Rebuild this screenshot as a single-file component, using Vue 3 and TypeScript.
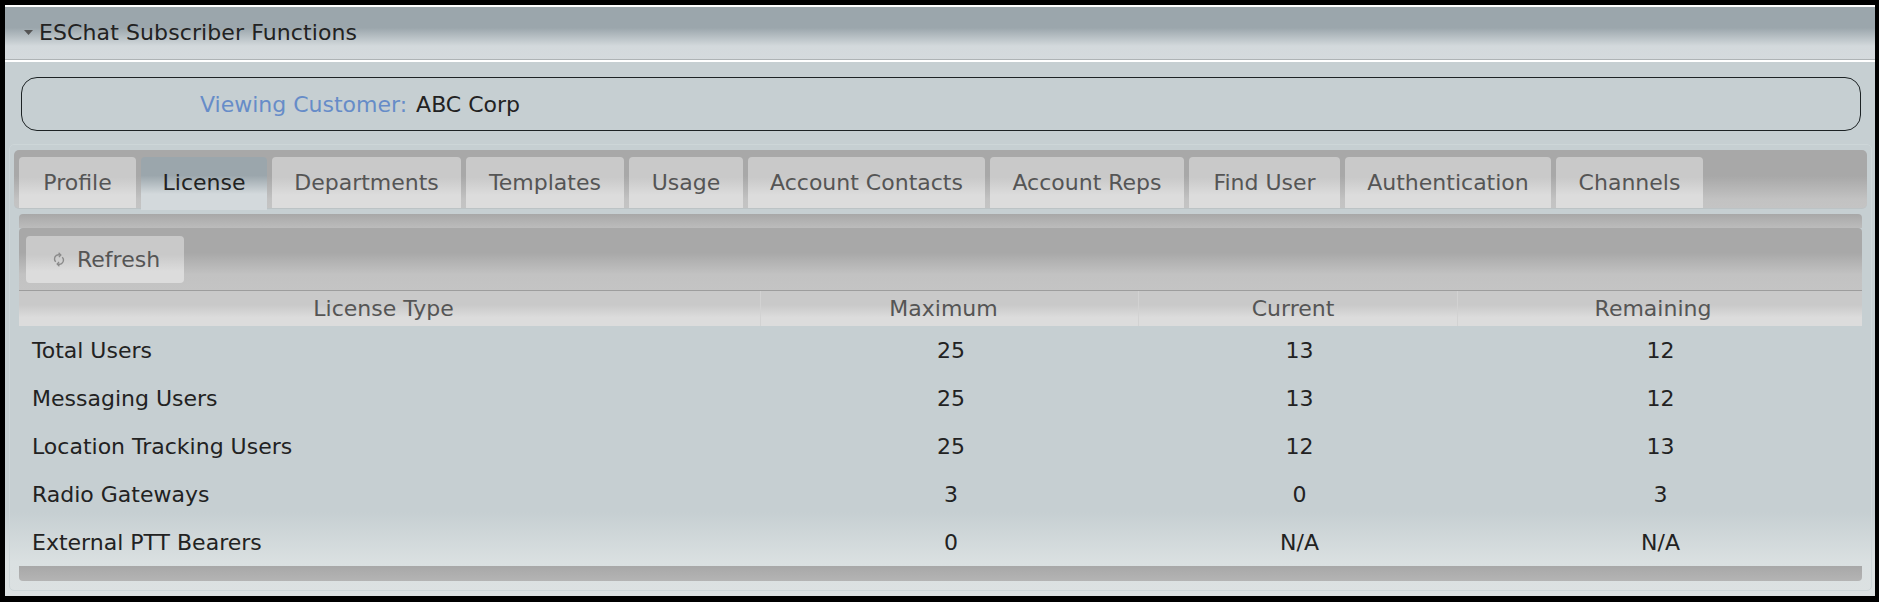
<script setup lang="ts">
const tabs: string[] = ['Profile', 'License', 'Departments', 'Templates', 'Usage', 'Account Contacts', 'Account Reps', 'Find User', 'Authentication', 'Channels']
const columns: string[] = ['License Type', 'Maximum', 'Current', 'Remaining']
const rows: string[][] = [
  ['Total Users', '25', '13', '12'],
  ['Messaging Users', '25', '13', '12'],
  ['Location Tracking Users', '25', '12', '13'],
  ['Radio Gateways', '3', '0', '3'],
  ['External PTT Bearers', '0', 'N/A', 'N/A'],
]
</script>

<template>
  <div class="frame">
    <div class="window">
      <header class="title">
        <svg class="caret" width="9" height="5" viewBox="0 0 9 5"><path d="M0 0h9L4.5 5z" fill="#555" /></svg>
        <span>ESChat Subscriber Functions</span>
      </header>
      <section class="content">
        <div class="customer">
          <span class="customer-label">Viewing Customer:</span>
          <span>ABC Corp</span>
        </div>
        <div class="panel">
          <nav class="tabbar">
            <a v-for="t in tabs" :key="t" class="tab" :class="{ active: t === 'License' }">{{ t }}</a>
          </nav>
          <div class="strip"></div>
          <div class="toolbar">
            <button class="refresh" type="button">
              <svg width="12" height="15" viewBox="0 0 12 15" fill="none" stroke="#8a8a8a" stroke-width="1.4">
                <path d="M7.2 3C4.6 2.2 1.5 3.7 1.5 6.9c0 1.2.5 2.2 1.3 2.9" />
                <path d="M4.8 12c2.6.8 5.7-.7 5.7-3.9 0-1.2-.5-2.2-1.3-2.9" />
                <path d="M5.6.8 7.9 3 5.9 5.2M6.4 14.2 4.1 12 6.1 9.8" stroke-width="1.2" />
              </svg>
              <span>Refresh</span>
            </button>
          </div>
          <div class="thead">
            <div v-for="c in columns" :key="c" class="th">{{ c }}</div>
          </div>
          <div v-for="r in rows" :key="r[0]" class="tr">
            <div v-for="(v, i) in r" :key="i" class="td">{{ v }}</div>
          </div>
          <div class="footer"></div>
        </div>
      </section>
    </div>
  </div>
</template>

<style>
html, body { margin: 0; background: #000; }
</style>

<style scoped>
.frame {
  box-sizing: border-box;
  width: 1879px;
  height: 602px;
  padding: 5px 4px 6px 5px;
  background: #000;
  font-family: "DejaVu Sans", sans-serif;
  font-size: 22px;
  color: #222;
}
.window {
  height: 100%;
  display: flex;
  flex-direction: column;
}
.title {
  box-sizing: border-box;
  height: 57px;
  flex: none;
  display: flex;
  align-items: center;
  gap: 6px;
  padding: 2px 0 5px 19px;
  letter-spacing: 0.1px;
  background:
    linear-gradient(#fff, #fff) top / 100% 2px no-repeat,
    linear-gradient(#fff, #fff) bottom / 100% 2px no-repeat,
    linear-gradient(#aeb3b5, #aeb3b5) 0 54px / 100% 1px no-repeat,
    linear-gradient(#9ba6ac 0%, #9ba6ac 40%, #d3d9dc 72%, #d5dadd 100%);
}
.caret { margin-top: 1px; }
.content {
  flex: 1;
  min-height: 0;
  padding: 15px 3px 0 4px;
  background: linear-gradient(#c6cfd2 0, #c6cfd2 450px, #dae0e1 500px, #dce1e2 100%);
}
.customer {
  box-sizing: border-box;
  height: 54px;
  margin: 0 11px 0 12px;
  padding-left: 178px;
  display: flex;
  align-items: center;
  gap: 9px;
  border: 1px solid #1d2325;
  border-radius: 16px;
}
.customer-label { color: #668cc8; }
.panel {
  margin-top: 13px;
  padding: 5px 4px 0;
  height: 447px;
  box-sizing: border-box;
  border: 1px solid #cdd6d8;
  border-radius: 5px;
}
.tabbar {
  box-sizing: border-box;
  height: 59px;
  display: grid;
  grid-template-columns: 117px 126px 189px 158px 114px 237px 194px 151px 206px 147px;
  grid-template-rows: 51px;
  gap: 5px;
  padding: 7px 0 0 5px;
  border-bottom: 1px solid #bcc3c5;
  border-radius: 5px;
  background: linear-gradient(#a8a8a8 0%, #a8a8a8 45%, #c2c2c2 85%, #c4c4c4 100%);
}
.tab {
  box-sizing: border-box;
  height: 51px;
  display: flex;
  align-items: center;
  justify-content: center;
  border-radius: 4px 4px 0 0;
  color: #555;
  background: linear-gradient(#c9c9c9 0%, #c9c9c9 40%, #dcdcdc 75%, #dcdcdc 100%);
}
.tab.active {
  height: 53px;
  padding-bottom: 2px;
  color: #222;
  background: linear-gradient(#9ba6ac 0%, #9ba6ac 35%, #d3d9dc 70%, #d3d9dc 100%);
}
.strip {
  height: 14px;
  margin: 5px 5px 0;
  border-radius: 4px 4px 0 0;
  background: linear-gradient(#a8a8a8, #bcbcbc);
}
.toolbar {
  box-sizing: border-box;
  height: 63px;
  margin: 0 5px;
  padding: 8px 7px 0;
  border-bottom: 1px solid #9d9d9d;
  border-radius: 4px 4px 0 0;
  background: linear-gradient(#a8a8a8 0%, #a8a8a8 40%, #c2c2c2 75%, #c4c4c4 100%);
}
.refresh {
  box-sizing: border-box;
  width: 158px;
  height: 47px;
  display: flex;
  align-items: center;
  gap: 12px;
  padding: 0 0 0 27px;
  border: 0;
  border-radius: 4px;
  font: inherit;
  color: #555;
  background: linear-gradient(#c9c9c9 0%, #c9c9c9 40%, #dcdcdc 75%, #dcdcdc 100%);
}
.thead {
  height: 35px;
  margin: 0 5px;
  display: grid;
  grid-template-columns: 741px 378px 319px 405px;
  background: linear-gradient(#c9c9c9 0%, #c9c9c9 40%, #dcdcdc 75%, #dcdcdc 100%);
}
.th {
  box-sizing: border-box;
  display: flex;
  align-items: center;
  justify-content: center;
  padding-right: 12px;
  color: #555;
  border-left: 1px solid #d2d2d2;
}
.th:first-child { border-left: 0; }
.th:nth-child(3) { padding-right: 10px; }
.th:nth-child(4) { padding-right: 14px; }
.tr {
  height: 48px;
  margin: 0 5px;
  display: grid;
  grid-template-columns: 741px 378px 319px 405px;
  align-items: center;
  text-align: center;
}
.td:first-child { text-align: left; padding-left: 13px; }
.td:nth-child(2), .td:nth-child(3) { padding-left: 4px; }
.td:nth-child(4) { padding-left: 2px; }
.footer {
  height: 15px;
  margin: 0 5px;
  border-radius: 0 0 4px 4px;
  background: linear-gradient(#a8a8a8, #b4b4b4);
}
</style>
